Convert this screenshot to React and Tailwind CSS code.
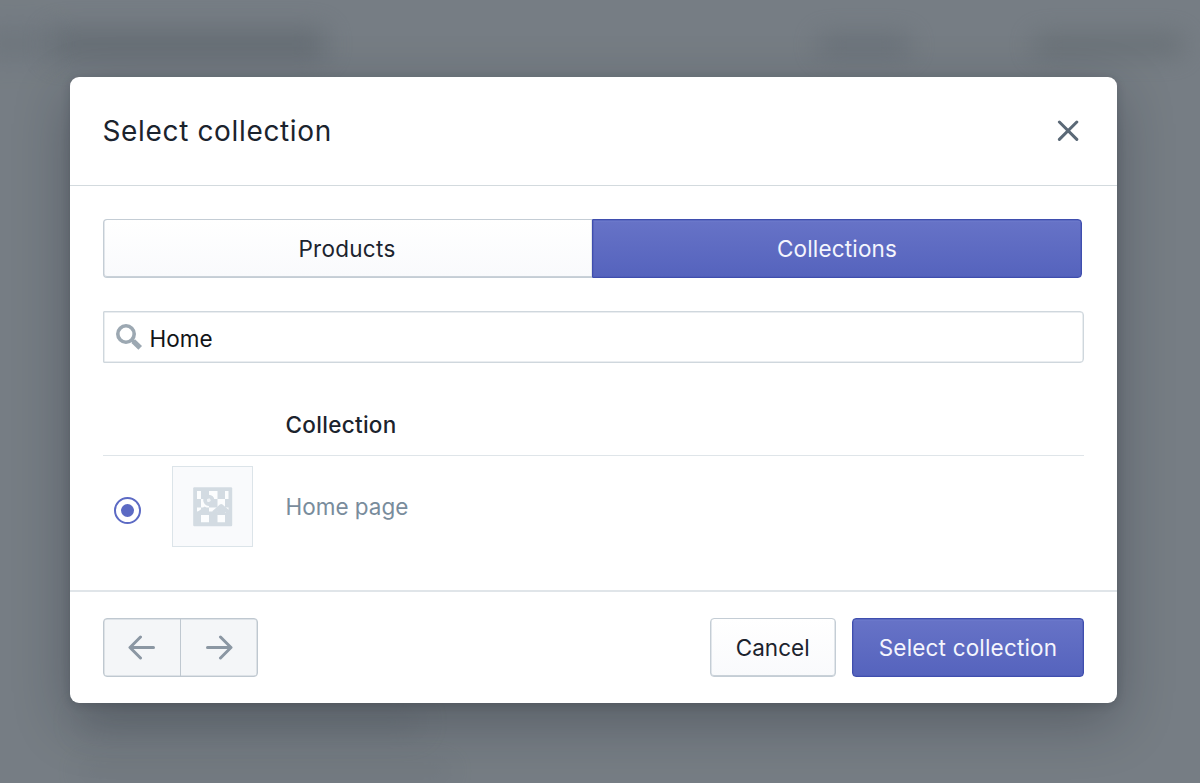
import React from "react";

function SearchIcon() {
  return (
    <svg width="28" height="28" viewBox="0 0 28 28" fill="none" stroke="#9ca8b2">
      <circle cx="11" cy="11" r="8.2" strokeWidth="3.6" />
      <path d="M16.8 16.8L19 19" strokeWidth="3.4" />
      <path d="M18.2 18.2L25.2 24.9" strokeWidth="5.2" />
    </svg>
  );
}

function Arrow({ flip }) {
  return (
    <svg width="28" height="26" viewBox="0 0 28 26" fill="none" stroke="#8b97a3" strokeWidth="3" strokeLinecap="round" strokeLinejoin="round">
      {flip ? <path d="M2.5 12.5H25.5M15.5 2L26 12.5L15.5 23" /> : <path d="M25.5 12.5H2.5M12.5 2L2 12.5L12.5 23" />}
    </svg>
  );
}

function PlaceholderImage() {
  return (
    <svg width="40" height="40" viewBox="0 0 40 40">
      <rect x="0.2" y="0.2" width="39" height="39" rx="1.2" fill="#d3dbe2" />
      <g fill="#fcfdfe">
        <path d="M4 4h4v8h-4zM16 4h8.5v8h-8.5zM32 4h3.5v8h-3.5z" />
        <path d="M8 12h8v8.5h-8zM24.5 12h7.5v8h-7.5z" />
        <path d="M4 20.5h4v4h-4zM16 20.5h8.5v4h-8.5zM32 20.5h3.5v5h-3.5z" />
        <path d="M8 28h8v7.3h-8zM24.5 28h7.5v7.3h-7.5z" />
      </g>
      <circle cx="15.8" cy="13.3" r="3.7" fill="none" stroke="#d3dbe2" strokeWidth="3.8" />
      <circle cx="15.8" cy="13.3" r="1.8" fill="#f1f4f7" />
      <path d="M20.5 25.8L28.2 19L36 25.8" fill="none" stroke="#d3dbe2" strokeWidth="4" strokeLinejoin="round" />
      <path d="M4 25.2L11.8 19.5L16 23V27.5H4z" fill="#d3dbe2" />
    </svg>
  );
}

const primary = "bg-linear-to-b from-[#6773c7] to-[#5563bd] text-[#f4f5fd] border border-[#3f4eae] shadow-[inset_0_0_0_0.5px_#4a58b5,inset_0_1.5px_0_#6f7ccd]";
const secondary = "bg-linear-to-b from-white to-[#f9fafc] text-[#1b232d] border border-[#c4cdd5] shadow-[inset_0_-0.5px_0_0.5px_#c9d1d8]";

export default function App() {
  return (
    <div className="relative h-[783px] w-[1200px] overflow-hidden bg-[#767d84] pl-[70px] pt-[77px] font-['Inter',sans-serif] text-[22.5px] text-[#1b232d]">
      <div className="absolute left-[50px] top-[30px] h-[28px] w-[275px] bg-[#5f676e] opacity-80 blur-[14px]" />
      <div className="absolute -left-[20px] top-[30px] h-[28px] w-[70px] bg-[#656d74] opacity-50 blur-[14px]" />
      <div className="absolute left-[818px] top-[35px] h-[20px] w-[92px] bg-[#626a72] opacity-70 blur-[13px]" />
      <div className="absolute left-[1034px] top-[35px] h-[20px] w-[148px] bg-[#61696e] opacity-70 blur-[13px]" />
      <div className="absolute left-[80px] top-[712px] h-[20px] w-[340px] bg-[#525b62] opacity-25 blur-[15px]" />
      <div className="absolute left-[80px] top-[764px] h-[14px] w-[370px] bg-[#5c646b] opacity-25 blur-[12px]" />

      <div className="relative flex h-[626px] w-[1046.5px] flex-col rounded-[9px] bg-white shadow-[0_2px_10px_rgba(22,29,37,0.18),0_18px_56px_rgba(22,29,37,0.32)]">
        <header className="flex h-[109px] shrink-0 items-center justify-between border-b border-[#d3dade] pl-[32.5px] pr-[38px]">
          <h2 className="text-[28px] leading-none tracking-[0.65px]">Select collection</h2>
          <svg width="22" height="22" viewBox="0 0 22 22" stroke="#5b6977" strokeWidth="3" strokeLinecap="round">
            <path d="M2.4 2L19.8 19.4M19.8 2L2.4 19.4" />
          </svg>
        </header>

        <main className="flex flex-1 flex-col pl-[33px] pr-[33px] pt-[33px]">
          <div className="flex h-[59px] w-[979px] shrink-0">
            <button className={"w-[489px] rounded-l-[4px] border-r-0 pr-[2px] tracking-[0.28px] " + secondary}>Products</button>
            <button className={"flex-1 rounded-r-[4px] tracking-[0.18px] " + primary}>Collections</button>
          </div>
          <div className="mt-[32.5px] flex h-[52px] shrink-0 items-center rounded-[4px] rounded-l-[1px] border border-[#cfd7dd] pl-[11px] shadow-[inset_0_0_0_0.5px_#d5dce1]">
            <SearchIcon />
            <span className="ml-[6.5px] mt-[5px] text-[#121417]">Home</span>
          </div>
          <div className="mt-[32.5px] flex h-[61px] shrink-0 items-center border-b border-[#dfe5e9] pl-[182.5px] font-medium">
            <span className="tracking-[0.3px]">Collection</span>
          </div>
          <div className="flex items-center pt-[10px]">
            <span className="ml-[11px] mt-[7px] flex size-[27px] items-center justify-center rounded-full border-2 border-[#5c6ac4] bg-white">
              <span className="size-[13px] rounded-full bg-[#5c6ac4]" />
            </span>
            <span className="ml-[31px] flex size-[81px] items-center justify-center border border-[#dce4e9] bg-[#f9fafc]">
              <PlaceholderImage />
            </span>
            <span className="ml-[32.5px] text-[#798c9c]">Home page</span>
          </div>
        </main>

        <footer className="flex h-[113px] shrink-0 items-start border-t-2 border-[#e0e5e9] pl-[33px] pr-[32.5px] pt-[26px]">
          <div className="flex h-[59px] w-[155px] rounded-[4px] border border-[#bfc8d0] bg-[#f4f6f8] shadow-[inset_0_0_0_0.5px_#c6ced5]">
            <button className="flex flex-1 items-center justify-center border-r border-[#bfc8d0]"><Arrow /></button>
            <button className="flex flex-1 items-center justify-center"><Arrow flip /></button>
          </div>
          <button className={"ml-auto h-[59px] w-[125.5px] rounded-[4px] tracking-[0.05px] " + secondary}>Cancel</button>
          <button className={"ml-[16.5px] h-[59px] w-[232px] rounded-[4px] tracking-[0.18px] " + primary}>Select collection</button>
        </footer>
      </div>
    </div>
  );
}
